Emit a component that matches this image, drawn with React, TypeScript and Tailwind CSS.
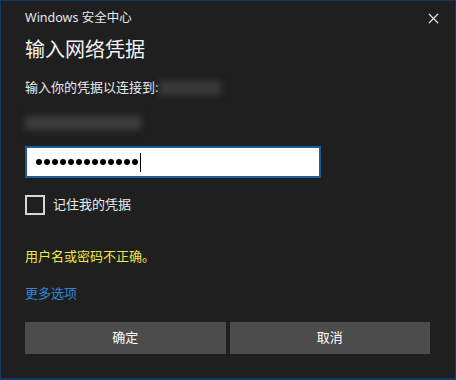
import { X } from 'lucide-react'

export default function App() {
  const font = { fontFamily: '"Segoe UI", "Noto Sans", "Noto Sans CJK SC", sans-serif' }
  const dots = Array.from({ length: 13 })

  return (
    <div className="w-[456px] h-[380px] bg-[#0f3a66] p-[1px] pb-[2px]" style={font}>
      <div className="h-full w-full bg-[#1f1f1f] text-white px-[24px] flex flex-col">
        {/* Title bar */}
        <div className="flex items-center justify-between h-[34px] pt-[1px]">
          <span className="text-[12.5px] text-[#e8e8e8]">Windows 安全中心</span>
          <X className="w-[17px] h-[17px] -mr-[11px] text-[#e0e0e0]" strokeWidth={1.8} />
        </div>

        <h1 className="text-[20px] leading-[28px] mt-[1px] text-[#f4f4f4]">输入网络凭据</h1>

        <div className="flex items-center mt-[14px] h-[20px]">
          <span className="text-[13px] text-[#ececec]">输入你的凭据以连接到:</span>
          <div className="w-[62px] h-[14px] bg-[#3a3a3a] blur-[3px] ml-[1px]" />
        </div>

        <div className="mt-[15px] h-[20px] flex items-center">
          <div className="w-[116px] h-[14px] bg-[#3c3c3c] blur-[3px]" />
        </div>

        {/* Password input */}
        <div className="mt-[13px] w-[296px] h-[32px] bg-white border-2 border-[#1d5e9a] flex items-center pl-[9px]">
          <div className="flex items-center gap-[2px]">
            {dots.map((_, i) => (
              <span key={i} className="w-[6px] h-[6px] rounded-full bg-black" />
            ))}
          </div>
          <span className="w-[1px] h-[19px] bg-black ml-[2px]" />
        </div>

        {/* Checkbox */}
        <label className="flex items-center mt-[17px] h-[20px]">
          <span className="w-[20px] h-[20px] border-2 border-[#d6d6d6]" />
          <span className="ml-[8px] text-[13px] text-[#ececec]">记住我的凭据</span>
        </label>

        <div className="mt-[32px] text-[13px] text-[#f1e64b]">用户名或密码不正确。</div>

        <div className="mt-[17px] text-[13px] text-[#2f86d6]">更多选项</div>

        <div className="mt-[19px] grid grid-cols-2 gap-[4px] pr-[1px]">
          <button className="h-[32px] bg-[#4c4c4c] text-[13px] text-white">确定</button>
          <button className="h-[32px] bg-[#4c4c4c] text-[13px] text-white">取消</button>
        </div>
      </div>
    </div>
  )
}
